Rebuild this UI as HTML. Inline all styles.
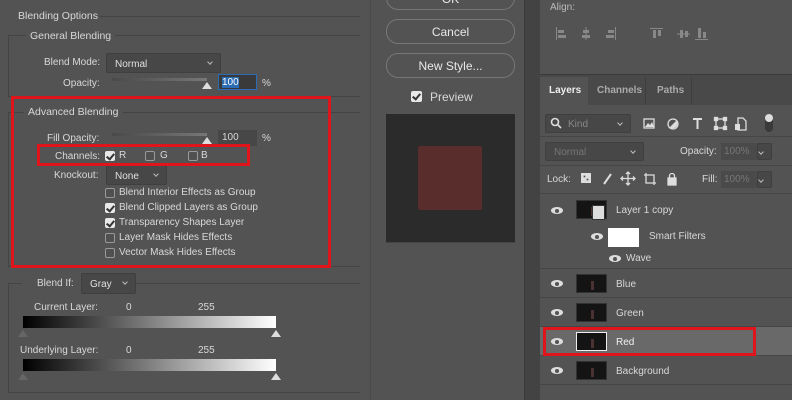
<!DOCTYPE html>
<html><head><style>
*{margin:0;padding:0;box-sizing:border-box}
body{width:792px;height:400px;background:#535353;font-family:"Liberation Sans",sans-serif;font-size:10px;color:#d8d8d8;position:relative;overflow:hidden}
.a{position:absolute}
.line{position:absolute;border:1px solid #444;}
.sel{position:absolute;background:#474747;border:1px solid #3f3f3f;border-radius:2px;color:#e0e0e0;padding:5px 0 0 8px}
.sel:after{content:"";position:absolute;right:8px;top:6px;width:3px;height:3px;border-right:1px solid #bbb;border-bottom:1px solid #bbb;transform:rotate(45deg)}
.cb{position:absolute;width:10px;height:10px;border:1px solid #999;border-radius:2px;background:#505050}
.cb.on{background:#e8e8e8;border-color:#e8e8e8}
.cb.on:after{content:"";position:absolute;left:2px;top:0px;width:3px;height:6px;border-right:2px solid #333;border-bottom:2px solid #333;transform:rotate(40deg)}
.red{position:absolute;border:3px solid #e0141b}
.btn{position:absolute;border:1px solid #777;border-radius:12px;text-align:center;color:#e8e8e8;font-size:12px;padding-top:5px}
.thumb{position:absolute;width:31px;height:19px;background:#141414;border:1px solid #333}
.thumb:after{content:"";position:absolute;left:14px;top:6px;width:3px;height:9px;background:#4a3232}
.eye{position:absolute;width:12px;height:7px;border-radius:50%;background:#ddd}
.eye:after{content:"";position:absolute;left:4px;top:1.5px;width:4px;height:4px;border-radius:50%;background:#535353}
.row{position:absolute;left:540px;width:252px;border-bottom:1px solid #464646}
.grad{position:absolute;left:23px;width:253px;height:12px;background:linear-gradient(90deg,#000,#fff)}
.tri{position:absolute;width:0;height:0;border-left:5px solid transparent;border-right:5px solid transparent;border-bottom:7px solid #ddd}
</style></head><body>
<div class="a" style="left:18px;top:10px;font-size:10.5px">Blending Options</div>
<div class="line" style="left:100px;top:16px;width:260px;height:0;border-width:1px 0 0 0"></div>
<div class="line" style="left:8px;top:35px;width:352px;height:62px;border-right:none"></div>
<div class="a" style="left:26px;top:30px;background:#535353;padding:0 4px;font-size:10.5px">General Blending</div>
<div class="a" style="left:44px;top:57px">Blend Mode:</div>
<div class="sel" style="left:106px;top:53px;width:115px;height:20px">Normal</div>
<div class="a" style="left:63px;top:78px">Opacity:</div>
<div class="a" style="left:112px;top:78px;width:95px;height:3px;background:linear-gradient(90deg,#4a4a4a,#777)"></div>
<div class="tri" style="left:202px;top:82px"></div>
<div class="a" style="left:218px;top:74px;width:39px;height:16px;border:1px solid #2c6cb4;background:#3a3a3a;padding:2px 0 0 3px"><span style="background:#2c6cb4;color:#fff">100</span></div>
<div class="a" style="left:262px;top:78px">%</div>

<div class="line" style="left:8px;top:112px;width:352px;height:155px;border-right:none"></div>
<div class="a" style="left:24px;top:106px;background:#535353;padding:0 4px;font-size:10.5px">Advanced Blending</div>
<div class="a" style="left:47px;top:133px">Fill Opacity:</div>
<div class="a" style="left:112px;top:133px;width:95px;height:3px;background:linear-gradient(90deg,#4a4a4a,#777)"></div>
<div class="tri" style="left:202px;top:137px"></div>
<div class="a" style="left:218px;top:130px;width:39px;height:16px;background:#474747;padding:2px 0 0 4px">100</div>
<div class="a" style="left:262px;top:133px">%</div>
<div class="a" style="left:55px;top:151px">Channels:</div>
<div class="cb on" style="left:105px;top:151px"></div><div class="a" style="left:119px;top:150px">R</div>
<div class="cb" style="left:145px;top:151px"></div><div class="a" style="left:160px;top:150px">G</div>
<div class="cb" style="left:188px;top:151px"></div><div class="a" style="left:201px;top:150px">B</div>
<div class="a" style="left:54px;top:170px">Knockout:</div>
<div class="sel" style="left:106px;top:165px;width:61px;height:20px">None</div>
<div class="cb" style="left:105px;top:188px"></div><div class="a" style="left:119px;top:187px">Blend Interior Effects as Group</div>
<div class="cb on" style="left:105px;top:203px"></div><div class="a" style="left:119px;top:202px">Blend Clipped Layers as Group</div>
<div class="cb on" style="left:105px;top:218px"></div><div class="a" style="left:119px;top:217px">Transparency Shapes Layer</div>
<div class="cb" style="left:105px;top:233px"></div><div class="a" style="left:119px;top:232px">Layer Mask Hides Effects</div>
<div class="cb" style="left:105px;top:248px"></div><div class="a" style="left:119px;top:247px">Vector Mask Hides Effects</div>

<div class="line" style="left:8px;top:283px;width:352px;height:110px;border-right:none"></div>
<div class="a" style="left:22px;top:277px;width:60px;height:12px;background:#535353"></div>
<div class="a" style="left:37px;top:278px">Blend If:</div>
<div class="sel" style="left:81px;top:273px;width:55px;height:21px">Gray</div>
<div class="a" style="left:34px;top:302px">Current Layer:</div>
<div class="a" style="left:126px;top:302px">0</div><div class="a" style="left:198px;top:302px">255</div>
<div class="grad" style="top:316px"></div>
<div class="tri" style="left:18px;top:330px;border-bottom-color:#666"></div>
<div class="tri" style="left:271px;top:330px"></div>
<div class="a" style="left:20px;top:345px">Underlying Layer:</div>
<div class="a" style="left:126px;top:345px">0</div><div class="a" style="left:198px;top:345px">255</div>
<div class="grad" style="top:359px"></div>
<div class="tri" style="left:18px;top:373px;border-bottom-color:#666"></div>
<div class="tri" style="left:271px;top:373px"></div>

<div class="red" style="left:11px;top:96px;width:320px;height:172px"></div>
<div class="red" style="left:37px;top:144px;width:213px;height:22px"></div>

<div class="btn" style="left:386px;top:-14px;width:129px;height:24px">OK</div>
<div class="btn" style="left:386px;top:19px;width:129px;height:25px">Cancel</div>
<div class="btn" style="left:386px;top:53px;width:129px;height:25px">New Style...</div>
<div class="cb on" style="left:411px;top:91px;width:11px;height:11px"></div>
<div class="a" style="left:430px;top:90px;font-size:12px">Preview</div>
<div class="a" style="left:386px;top:114px;width:129px;height:129px;background:#2b2b2b;border-bottom:1px solid #444"></div>
<div class="a" style="left:418px;top:146px;width:64px;height:64px;background:#582d2b;border-radius:2px"></div>
<div class="a" style="left:370px;top:0;width:1px;height:400px;background:#4a4a4a"></div>
<div class="a" style="left:524px;top:0;width:16px;height:400px;background:#434343;border-left:1px solid #3a3a3a"></div>

<div class="a" style="left:550px;top:2px;color:#bbb">Align:</div>
<svg class="a" style="left:550px;top:24px" width="160" height="20" fill="#888" stroke="#888">
<line x1="6.5" y1="3" x2="6.5" y2="16"/><rect x="8" y="6" width="6" height="3" stroke="none"/><rect x="8" y="11" width="8" height="3" stroke="none"/>
<line x1="36" y1="3" x2="36" y2="16"/><rect x="33" y="6" width="6" height="3" stroke="none"/><rect x="32" y="11" width="8" height="3" stroke="none"/>
<line x1="65.5" y1="3" x2="65.5" y2="16"/><rect x="58" y="6" width="6" height="3" stroke="none"/><rect x="56" y="11" width="8" height="3" stroke="none"/>
<line x1="100" y1="4.5" x2="113" y2="4.5"/><rect x="103" y="6" width="3" height="8" stroke="none"/><rect x="108" y="6" width="3" height="6" stroke="none"/>
<line x1="127" y1="10" x2="140" y2="10"/><rect x="130" y="6" width="3" height="8" stroke="none"/><rect x="135" y="7" width="3" height="6" stroke="none"/>
<line x1="145" y1="15.5" x2="158" y2="15.5"/><rect x="148" y="4" width="3" height="10" stroke="none"/><rect x="153" y="8" width="3" height="6" stroke="none"/>
</svg>
<div class="a" style="left:540px;top:74px;width:252px;height:1px;background:#3a3a3a"></div>
<div class="a" style="left:540px;top:75px;width:252px;height:30px;background:#494949"></div>
<div class="a" style="left:540px;top:77px;width:48px;height:28px;background:#535353;font-weight:bold;color:#eee;padding:8px 0 0 9px">Layers</div>
<div class="a" style="left:597px;top:85px;font-weight:bold;color:#aaa">Channels</div>
<div class="a" style="left:657px;top:85px;font-weight:bold;color:#aaa">Paths</div>
<div class="a" style="left:645px;top:77px;width:1px;height:28px;background:#3e3e3e"></div>
<div class="a" style="left:691px;top:77px;width:1px;height:28px;background:#3e3e3e"></div>
<div class="sel" style="left:545px;top:114px;width:86px;height:19px;color:#888;padding-left:22px;padding-top:4px">Kind</div>
<svg class="a" style="left:550px;top:117px" width="12" height="12" fill="none" stroke="#ddd" stroke-width="1.6"><circle cx="5" cy="5" r="3.5"/><line x1="7.5" y1="7.5" x2="11" y2="11"/></svg>
<svg class="a" style="left:640px;top:114px" width="120" height="20" fill="none" stroke="#ddd" stroke-width="1.3">
<rect x="4" y="5" width="10" height="9"/><path d="M5 13l3-4 2 2 2-3 2 5z" fill="#ddd" stroke="none"/>
<circle cx="33" cy="10" r="5"/><path d="M29.5 13.5A5 5 0 0 0 36.5 6.5z" fill="#ddd" stroke="none"/>
<path d="M53 5h9M57.5 5v10" stroke-width="2"/>
<rect x="76" y="5" width="9" height="9"/><rect x="74.5" y="3.5" width="3" height="3" fill="#ddd"/><rect x="83.5" y="3.5" width="3" height="3" fill="#ddd"/><rect x="74.5" y="12.5" width="3" height="3" fill="#ddd"/><rect x="83.5" y="12.5" width="3" height="3" fill="#ddd"/>
<path d="M98 4h5l3 3v9h-8z"/><rect x="95" y="10" width="5" height="6" fill="#ddd" stroke="none"/>
</svg>
<div class="a" style="left:765px;top:114px;width:8px;height:18px;border-radius:4px;background:#3a3a3a"></div>
<div class="a" style="left:765px;top:114px;width:8px;height:8px;border-radius:50%;background:#ddd"></div>
<div class="a" style="left:540px;top:136px;width:252px;height:1px;background:#464646"></div>
<div class="sel" style="left:545px;top:142px;width:99px;height:19px;color:#777;padding-top:4px">Normal</div>
<div class="a" style="left:680px;top:146px">Opacity:</div>
<div class="a" style="left:721px;top:143px;width:36px;height:17px;background:#4a4a4a;color:#777;padding:3px 3px">100%</div>
<div class="sel" style="left:757px;top:143px;width:15px;height:17px;padding:0"></div>
<div class="a" style="left:540px;top:165px;width:252px;height:1px;background:#464646"></div>
<div class="a" style="left:547px;top:174px">Lock:</div>
<svg class="a" style="left:578px;top:170px" width="105" height="18" fill="none" stroke="#ddd" stroke-width="1.3">
<rect x="3" y="3" width="10" height="10" fill="#ddd" stroke="none"/><rect x="5" y="5" width="3" height="3" fill="#535353"/><rect x="8" y="8" width="3" height="3" fill="#535353"/>
<path d="M26 14l7-10" stroke-width="2"/>
<path d="M50 2v13M43.5 8.5h13M48 4l2-2 2 2M48 13l2 2 2-2M45 6.5l-2 2 2 2M55 6.5l2 2-2 2"/>
<path d="M68 3v10h10M66 5h10v10"/>
<rect x="90" y="8" width="8" height="7" fill="#ddd"/><path d="M91.5 8V6a2.5 2.5 0 0 1 5 0v2"/>
</svg>
<div class="a" style="left:702px;top:174px">Fill:</div>
<div class="a" style="left:721px;top:171px;width:36px;height:17px;background:#4a4a4a;color:#777;padding:3px 3px">100%</div>
<div class="sel" style="left:757px;top:171px;width:15px;height:17px;padding:0"></div>
<div class="a" style="left:540px;top:193px;width:252px;height:1px;background:#464646"></div>

<div class="row" style="top:194px;height:75px"></div>
<div class="eye" style="left:551px;top:207px"></div><div class="thumb" style="left:576px;top:200px"></div>
<div class="a" style="left:592px;top:205px;width:13px;height:15px;background:#ddd;border:1px solid #333"></div>
<div class="a" style="left:616px;top:205px">Layer 1 copy</div>
<div class="eye" style="left:591px;top:233px"></div>
<div class="a" style="left:608px;top:228px;width:31px;height:19px;background:#fff"></div>
<div class="a" style="left:649px;top:231px">Smart Filters</div>
<div class="eye" style="left:609px;top:255px"></div>
<div class="a" style="left:626px;top:253px">Wave</div>
<div class="row" style="top:269px;height:29px"></div>
<div class="eye" style="left:551px;top:280px"></div><div class="thumb" style="left:576px;top:274px"></div><div class="a" style="left:616px;top:279px">Blue</div>
<div class="row" style="top:298px;height:29px"></div>
<div class="eye" style="left:551px;top:309px"></div><div class="thumb" style="left:576px;top:303px"></div><div class="a" style="left:616px;top:308px">Green</div>
<div class="row" style="top:327px;height:29px;background:#696969"></div>
<div class="eye" style="left:551px;top:338px;"></div><div class="thumb" style="left:576px;top:332px;border:1px solid #eee"></div><div class="a" style="left:616px;top:337px;color:#f0f0f0">Red</div>
<div class="row" style="top:356px;height:29px"></div>
<div class="eye" style="left:551px;top:367px"></div><div class="thumb" style="left:576px;top:361px"></div><div class="a" style="left:616px;top:366px">Background</div>
<div class="red" style="left:543px;top:327px;width:213px;height:29px"></div>
</body></html>
